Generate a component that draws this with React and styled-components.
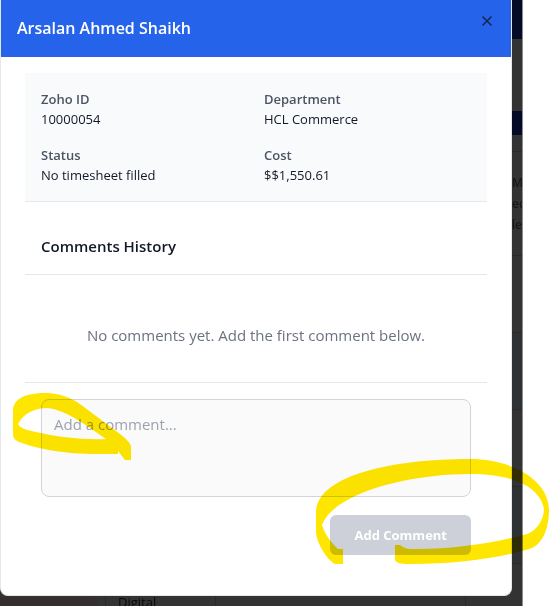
import React from "react";
import styled, { createGlobalStyle } from "styled-components";

const Global = createGlobalStyle`
  * { box-sizing: border-box; }
  body {
    margin: 0;
    background: #ffffff;
    color: #111827;
    font-family: "Segoe UI", "Open Sans", "Noto Sans", sans-serif;
    font-size: 14px;
    line-height: 20px;
  }
  button, textarea { font-family: inherit; }
`;

const Page = styled.div`
  position: relative;
  min-height: 100vh;
  overflow: hidden;
  padding-right: 28px;
  display: flex;
`;

const Backdrop = styled.div`
  flex: 1;
  min-width: 0;
  display: flex;
  flex-direction: column;
  background: #333333;
  border-right: 1px solid #8c8c8c;
`;

const Upper = styled.div`
  display: flex;
`;

const Dialog = styled.section`
  flex: 1;
  min-width: 0;
  background: #ffffff;
  border: 1px solid #e5e7eb;
  border-top: 0;
  border-radius: 0 0 8px 8px;
  overflow: hidden;
`;

const Header = styled.header`
  display: flex;
  align-items: flex-start;
  justify-content: space-between;
  padding: 14px 16px 15px;
  background: #2563eb;
`;

const Title = styled.h2`
  margin: 0;
  color: #ffffff;
  font-size: 16px;
  line-height: 28px;
  font-weight: 600;
`;

const CloseButton = styled.button`
  display: flex;
  padding: 0;
  border: 0;
  background: none;
  color: #14264f;
`;

const Body = styled.div`
  padding: 16px 24px 40px;
`;

const Details = styled.dl`
  margin: 0;
  padding: 16px;
  display: grid;
  grid-template-columns: 1fr 1fr;
  gap: 16px;
  background: #f9fafb;
  border-bottom: 1px solid #e5e7eb;
`;

const Label = styled.dt`
  color: #4b5563;
  font-weight: 600;
  font-size: 13px;
`;

const Value = styled.dd`
  margin: 0;
  font-size: 13px;
`;

const HistoryTitle = styled.h3`
  margin: 16px 0 0;
  padding: 16px;
  border-bottom: 1px solid #e5e7eb;
  font-size: 15px;
  line-height: 24px;
  font-weight: 600;
`;

const EmptyText = styled.p`
  margin: 0;
  padding: 48px 16px 35px;
  border-bottom: 1px solid #e5e7eb;
  color: #6b7280;
  text-align: center;
  font-size: 15px;
  line-height: 24px;
`;

const Form = styled.form`
  padding: 16px 16px 0;
  display: flex;
  flex-direction: column;
  align-items: flex-end;
  gap: 18px;
`;

const CommentBox = styled.textarea`
  display: block;
  width: 100%;
  height: 98px;
  padding: 12px;
  border: 1px solid #d1d5db;
  border-radius: 8px;
  background: #fafafa;
  resize: none;
  font-size: 15px;
  line-height: 24px;
  &::placeholder { color: #9ca3af; opacity: 1; }
`;

const SubmitButton = styled.button`
  padding: 10px 24px;
  border: 0;
  border-radius: 6px;
  background: #cdd0d8;
  color: #ffffff;
  font-size: 13px;
  line-height: 20px;
  font-weight: 700;
`;

const Sliver = styled.div`
  width: 10px;
  overflow: hidden;
  display: flex;
  flex-direction: column;
`;

const bandColors = { navy: "#050b26", plain: "#333333", tint: "#2f3235" };

const Band = styled.div`
  flex: none;
  height: ${(p) => p.$height}px;
  background: ${(p) => bandColors[p.$tone || "plain"]};
  border-bottom: ${(p) => (p.$line ? "1px solid #2a2a2a" : "0")};
`;

const SliverText = styled.div`
  flex: none;
  height: 104px;
  padding: 20px 0;
  border-bottom: 1px solid #2a2a2a;
  color: #14161b;
  font-size: 12px;
  font-weight: 600;
  line-height: 21px;
  white-space: nowrap;
`;

const SliverLine = styled.div`
  display: flex;
  justify-content: ${(p) => (p.$end ? "flex-end" : "flex-start")};
`;

const Strip = styled.div`
  flex: 1;
  height: 10px;
  overflow: hidden;
  display: flex;
  justify-content: space-between;
`;

const StripCell = styled.div`
  width: ${(p) => p.$width}px;
  height: 10px;
  padding-left: 12px;
  border-left: 1px solid #292929;
  color: #08090b;
  font-size: 13px;
  line-height: 12px;
`;

const StripTint = styled.div`
  width: 98px;
  margin: 1px 7px 0 0;
  border-radius: 0 8px 0 0;
  background: #352e2e;
`;

const StripGroup = styled.div`
  display: flex;
`;

const Marks = styled.svg`
  position: absolute;
  left: 0;
  top: 0;
  pointer-events: none;
  mix-blend-mode: multiply;
`;

const details = [
  ["Zoho ID", "10000054"],
  ["Department", "HCL Commerce"],
  ["Status", "No timesheet filled"],
  ["Cost", "$$1,550.61"],
];

export default function App() {
  return (
    <Page>
      <Global />
      <Backdrop>
        <Upper>
          <Dialog role="dialog" aria-labelledby="dialog-title">
            <Header>
              <Title id="dialog-title">Arsalan Ahmed Shaikh</Title>
              <CloseButton type="button" aria-label="Close">
                <svg width="16" height="16" viewBox="0 0 16 16" fill="none" stroke="currentColor" strokeWidth="1.5">
                  <path d="M3.5 2.5l9 9M12.5 2.5l-9 9" />
                </svg>
              </CloseButton>
            </Header>
            <Body>
              <Details>
                {details.map(([label, value]) => (
                  <div key={label}>
                    <Label>{label}</Label>
                    <Value>{value}</Value>
                  </div>
                ))}
              </Details>
              <HistoryTitle>Comments History</HistoryTitle>
              <EmptyText>No comments yet. Add the first comment below.</EmptyText>
              <Form>
                <CommentBox aria-label="Comment" placeholder="Add a comment..." />
                <SubmitButton type="button">Add Comment</SubmitButton>
              </Form>
            </Body>
          </Dialog>
          <Sliver>
            <Band $height={39} $tone="navy" />
            <Band $height={72} />
            <Band $height={24} $tone="navy" />
            <Band $height={17} $line />
            <SliverText>
              <SliverLine>Mo</SliverLine>
              <SliverLine>ec</SliverLine>
              <SliverLine $end>ple</SliverLine>
            </SliverText>
            <Band $height={77} $line />
            <Band $height={77} $tone="tint" $line />
            <Band $height={77} $line />
            <Band $height={77} $tone="tint" $line />
          </Sliver>
        </Upper>
        <Strip>
          <StripGroup>
            <StripTint />
            <StripCell $width={110}>Digital</StripCell>
            <StripCell $width={110} />
          </StripGroup>
          <StripCell $width={57} />
        </Strip>
      </Backdrop>
      <Marks width="551" height="606" viewBox="0 0 551 606" fill="#ffe600" aria-hidden="true">
        <path fillRule="evenodd" d="M13 411C13 399 25 393 45 393C66 393 78 402 92 413L120 434C126 439 131 443 131 447V460H125L118 451V454H98C65 454 38 449 22 443C15 441 13 438 13 434ZM18 424C24 413 35 408 47 408C67 410 87 426 106 439C83 440 57 437 36 432C26 430 20 428 18 424Z" />
        <path fillRule="evenodd" d="M343 549V564H335C328 561 316 543 316 531V513C316 476 390 459 470 459C512 459 549 480 549 510C549 528 543 543 532 548C505 557 460 564 410 564C400 564 395 563 395 559V545H400C405 549 408 549 415 549C460 549 498 542 527 534C538 530 544 518 544 509C540 487 513 474 471 474C408 474 334 493 322 525C326 538 335 546 338 549Z" />
      </Marks>
    </Page>
  );
}
